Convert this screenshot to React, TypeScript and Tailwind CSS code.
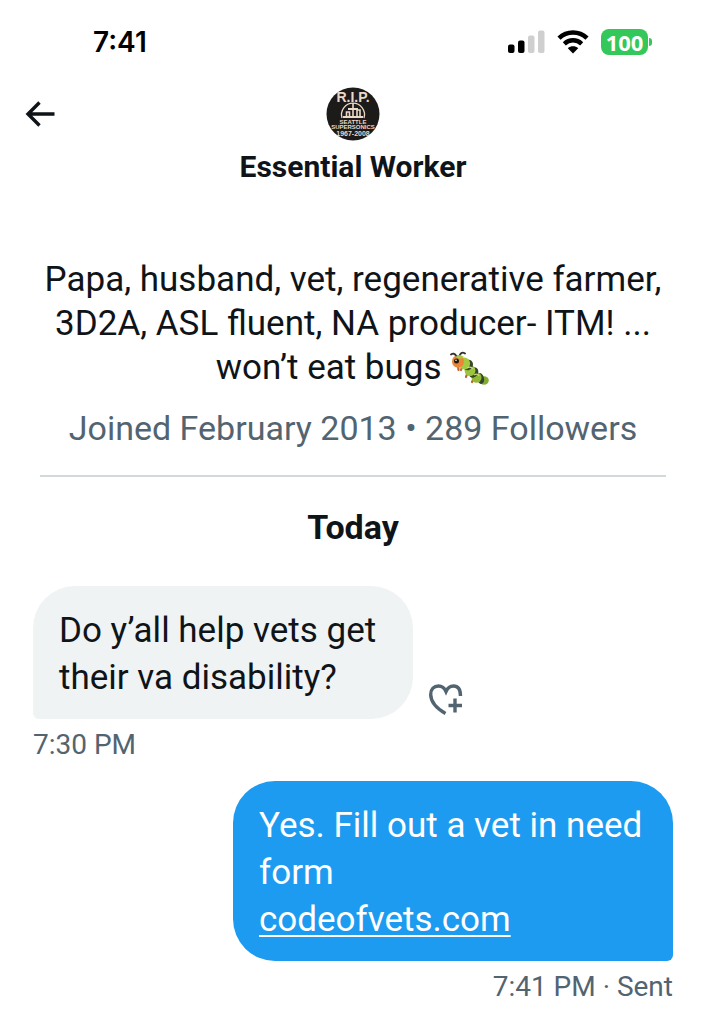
import type { ReactNode } from 'react';

function StatusBar() {
  return (
    <div className="flex h-7 items-center justify-between pl-[93px] pr-[54px]">
      <span className="font-['Inter',sans-serif] text-[28px] font-semibold leading-7 text-black">7:41</span>
      <div className="flex items-center gap-3">
        <svg viewBox="0 0 37 24" className="h-6 w-[37px]" aria-label="Signal">
          <rect x="0" y="14.5" width="6.5" height="8.5" rx="2" fill="#000" />
          <rect x="10" y="10.5" width="6.5" height="12.5" rx="2" fill="#000" />
          <rect x="20" y="5.5" width="6.5" height="17.5" rx="2" fill="#cfcfcf" />
          <rect x="30" y="0.5" width="6.5" height="22.5" rx="2" fill="#cfcfcf" />
        </svg>
        <svg viewBox="0 0 32 24" className="h-6 w-8" aria-label="Wi-Fi">
          <path d="M2 8.2C10 .6 22 .6 30 8.2" fill="none" stroke="#000" strokeWidth="4.6" />
          <path d="M7.3 13.8c5-4.7 12.4-4.7 17.4 0" fill="none" stroke="#000" strokeWidth="4.4" />
          <path d="M10.8 18.2c3-2.600 7.400-2.600 10.400 0L16 23.500z" fill="#000" />
        </svg>
        <div className="flex items-center gap-px">
          <span className="flex h-[26px] w-[47px] items-center justify-center rounded-lg bg-[#34c759] font-['Open_Sans',sans-serif] text-[22px] font-bold leading-6 text-white">
            100
          </span>
          <span className="h-2 w-[3px] rounded-r-full bg-[#34c759]" />
        </div>
      </div>
    </div>
  );
}

function Avatar() {
  return (
    <svg viewBox="0 0 54 54" className="size-[54px]" aria-label="Essential Worker">
      <circle cx="27" cy="27" r="26.5" fill="#1d1a1a" />
      <g fill="none" stroke="#ead8c8">
        <path d="M16 31a11.500 11.500 0 1 1 22 0" strokeWidth="1.3" />
        <path d="M27 16v15M20.500 30v-5h3v5M31 30v-7h3v7" strokeWidth="1.6" />
        <path d="M17 30h20M22 22h10" strokeWidth="2" />
      </g>
      <g fill="#ead8c8" fontFamily="Liberation Sans, sans-serif" fontWeight="700" textAnchor="middle">
        <text x="27" y="15" fontSize="14">R.I.P.</text>
        <text x="27" y="37" fontSize="6">SEATTLE</text>
        <text x="27" y="42" fontSize="6">SUPERSONICS</text>
        <text x="27" y="49" fontSize="7">1967-2008</text>
      </g>
    </svg>
  );
}

function Caterpillar() {
  return (
    <svg viewBox="0 0 40 36" className="inline-block h-9 w-10 align-[-8px]" aria-label="caterpillar">
      <path d="M8 14l.500 5M12 16l-1 3M17 23l-1 3M23 29l-1 2" stroke="#c4602c" strokeWidth="2.2" strokeLinecap="round" />
      <ellipse cx="34" cy="29.5" rx="4.8" ry="4.2" fill="#83ad30" />
      <ellipse cx="30.5" cy="27.5" rx="3.5" ry="5.5" fill="#354728" transform="rotate(-15 30.5 27.5)" />
      <ellipse cx="26.5" cy="26.5" rx="5" ry="5.2" fill="#91b936" />
      <ellipse cx="23.5" cy="21.5" rx="4.5" ry="5.5" fill="#354728" transform="rotate(35 23.5 21.5)" />
      <ellipse cx="20" cy="19.500" rx="5.4" ry="5.6" fill="#9cc43d" />
      <ellipse cx="18" cy="14" rx="4.8" ry="5.5" fill="#354728" transform="rotate(35 18 14)" />
      <ellipse cx="14.500" cy="12.500" rx="5.6" ry="6" fill="#a5c943" />
      <ellipse cx="8" cy="10.500" rx="6" ry="6.2" fill="#ee8534" />
      <path d="M5 5.500Q9 2.500 14 6Q11 9 7 7z" fill="#a5c943" />
      <circle cx="6.5" cy="10" r="2.5" fill="#24190f" />
      <circle cx="6" cy="9.2" r=".8" fill="#fff" />
      <path d="M6 4.500Q4 1.500 1 3.500M10 3.500q2-3 5-1" fill="none" stroke="#33312b" strokeWidth="1.8" strokeLinecap="round" />
      <path d="M17 17q4-2 6 1M24 24q4-2 5 1" fill="none" stroke="#cbdc77" strokeWidth="1.2" />
    </svg>
  );
}

type BubbleProps = {
  own?: boolean;
  children: ReactNode;
};

function Bubble({ own = false, children }: BubbleProps) {
  return (
    <div
      className={
        own
          ? 'w-[440px] rounded-[42px] rounded-br-[6px] bg-[#1d9bf0] px-[26px] pb-[18px] pt-[21px] text-[35px] leading-[47px] text-white'
          : 'w-[380px] rounded-[42px] rounded-bl-[6px] bg-[#eff3f4] px-[26px] pb-[18px] pt-[21px] text-[35px] leading-[47px] text-[#0f1419]'
      }
    >
      {children}
    </div>
  );
}

export default function App() {
  return (
    <main className="min-h-screen bg-white pt-7 font-['Roboto',sans-serif] text-[#0f1419]">
      <StatusBar />

      <header className="mt-[31px] grid grid-cols-[1fr_auto_1fr] px-[25px]">
        <button type="button" aria-label="Back" className="mt-3 size-[30px]">
          <svg viewBox="0 0 30 30" className="size-[30px]" fill="none" stroke="#0f1419" strokeWidth="3.4">
            <path d="M29.500 15H3.500M14.500 3.500L3 15l11.500 11.500" />
          </svg>
        </button>
        <div className="flex flex-col items-center gap-2">
          <Avatar />
          <h1 className="text-[30px] font-bold leading-9">Essential Worker</h1>
        </div>
      </header>

      <section className="mx-10 mt-[73px] border-b-2 border-[#d3d8db] pb-[25px] text-center">
        <p className="-mx-2 text-[35px] leading-[44px]">
          Papa, husband, vet, regenerative farmer,
          <br />
          3D2A, ASL fluent, NA producer- ITM! ...
          <br />
          won’t eat bugs <Caterpillar />
        </p>
        <p className="mt-4 text-[34px] leading-[44px] text-[#536471]">Joined February 2013 • 289 Followers</p>
      </section>

      <section className="px-[33px]">
        <h2 className="mt-7 text-center text-[34px] font-bold leading-[44px]">Today</h2>

        <div className="mt-[37px] flex items-end gap-4">
          <Bubble>
            Do y’all help vets get
            <br />
            their va disability?
          </Bubble>
          <button type="button" aria-label="Add reaction" className="size-9">
            <svg viewBox="0 0 36 36" className="size-9" fill="none" stroke="#536471" strokeWidth="3.4">
              <path d="M16.500 30.500C7 25 1.700 18.500 1.700 11.500C1.700 6 5 3 9.500 3c3.500 0 6 2 7.500 5.500C18.500 5 21 3 24.500 3C29 3 31.500 6.500 31.500 13" />
              <path d="M26 15.500v14M19.500 22.500h13.500" />
            </svg>
          </button>
        </div>
        <p className="mt-2 text-[28px] leading-9 text-[#536471]">7:30 PM</p>

        <div className="mt-[18px] flex flex-col items-end">
          <Bubble own>
            Yes. Fill out a vet in need
            <br />
            form
            <br />
            <a href="https://codeofvets.com" className="underline decoration-2 underline-offset-4">
              codeofvets.com
            </a>
          </Bubble>
          <p className="mt-2 text-[28px] leading-9 text-[#536471]">7:41 PM · Sent</p>
        </div>
      </section>
    </main>
  );
}
